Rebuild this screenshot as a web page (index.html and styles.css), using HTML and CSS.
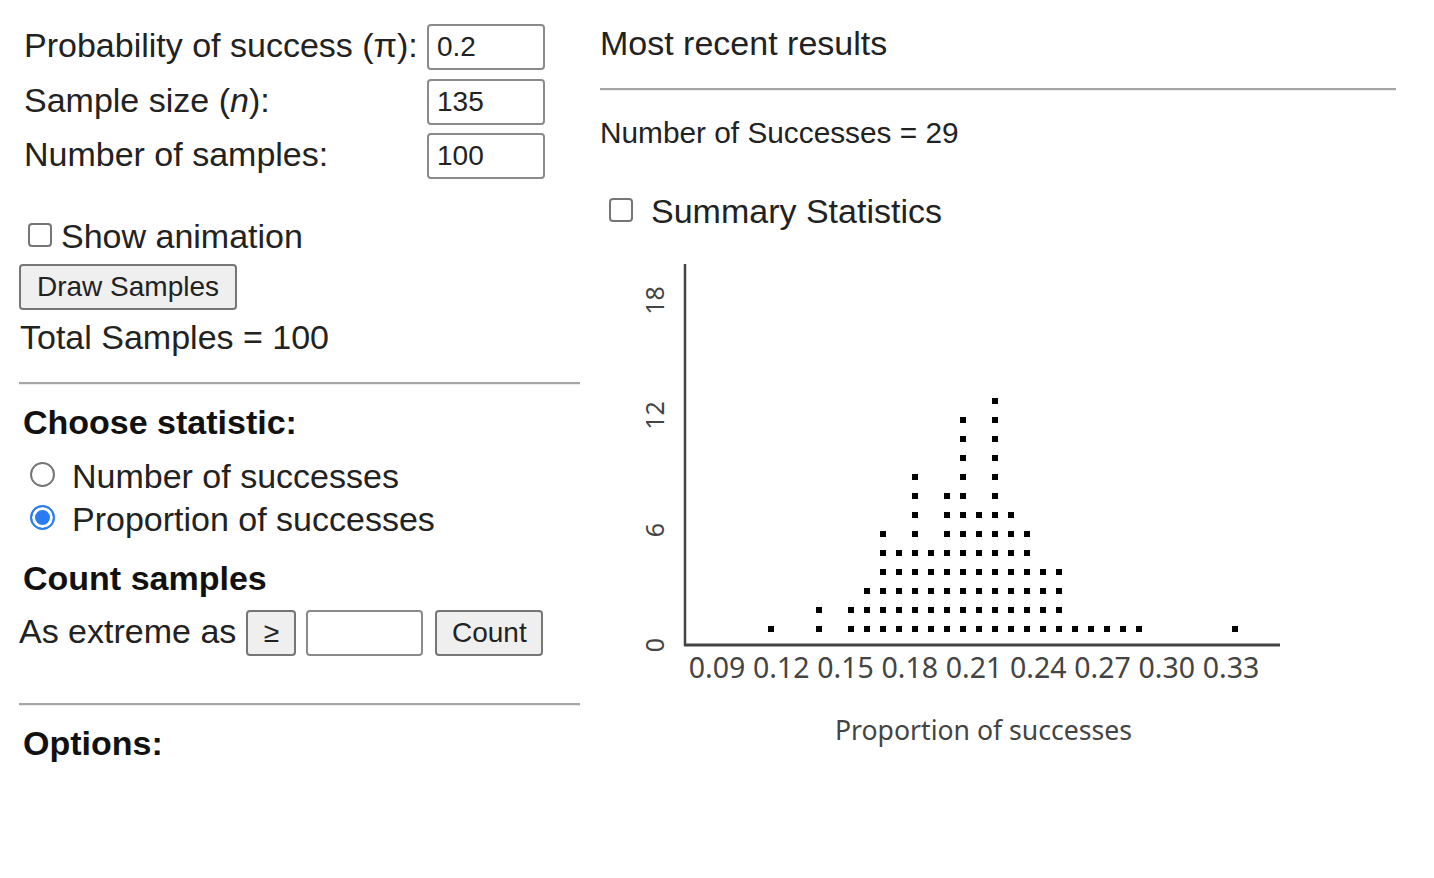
FILE: index.html
```html
<!DOCTYPE html>
<html lang="en">
<head>
<meta charset="utf-8">
<title>Binomial sampling</title>
<link rel="stylesheet" href="styles.css">
</head>
<body>
<div class="page">
  <div class="left">
    <div class="params">
      <label class="plabel">Probability of success (π):</label>
      <input class="field" type="text" value="0.2">
      <label class="plabel">Sample size (<i>n</i>):</label>
      <input class="field" type="text" value="135">
      <label class="plabel">Number of samples:</label>
      <input class="field" type="text" value="100">
    </div>
    <div class="anim-row">
      <span class="checkbox"></span>
      <span class="big">Show animation</span>
    </div>
    <button class="btn draw">Draw Samples</button>
    <div class="big total">Total Samples = 100</div>
    <div class="rule rule-a"></div>
    <div class="heading choose">Choose statistic:</div>
    <div class="radio-row first">
      <span class="radio"></span>
      <span class="big">Number of successes</span>
    </div>
    <div class="radio-row">
      <span class="radio checked"></span>
      <span class="big">Proportion of successes</span>
    </div>
    <div class="heading count-h">Count samples</div>
    <div class="extreme-row">
      <span class="big">As extreme as</span>
      <button class="btn ge">≥</button>
      <input class="field blank" type="text" value="">
      <button class="btn count">Count</button>
    </div>
    <div class="rule rule-b"></div>
    <div class="heading options">Options:</div>
  </div>

  <div class="right">
    <div class="big recent">Most recent results</div>
    <div class="rule rule-r"></div>
    <div class="succ">Number of Successes = 29</div>
    <div class="summary-row">
      <span class="checkbox"></span>
      <span class="big">Summary Statistics</span>
    </div>
    <svg class="chart" width="680" height="510" viewBox="620 250 680 510" xmlns="http://www.w3.org/2000/svg">
      <defs>
        <pattern id="dot" patternUnits="userSpaceOnUse" x="768" y="625" width="16" height="19">
          <rect x="0" y="0" width="6" height="6" fill="#000"/>
        </pattern>
      </defs>
      <g fill="url(#dot)" shape-rendering="crispEdges">
        <rect x="768" y="625" width="6" height="6"/>
        <rect x="816" y="606" width="6" height="25"/>
        <rect x="848" y="606" width="6" height="25"/>
        <rect x="864" y="587" width="6" height="44"/>
        <rect x="880" y="530" width="6" height="101"/>
        <rect x="896" y="549" width="6" height="82"/>
        <rect x="912" y="473" width="6" height="158"/>
        <rect x="928" y="549" width="6" height="82"/>
        <rect x="944" y="492" width="6" height="139"/>
        <rect x="960" y="416" width="6" height="215"/>
        <rect x="976" y="511" width="6" height="120"/>
        <rect x="992" y="397" width="6" height="234"/>
        <rect x="1008" y="511" width="6" height="120"/>
        <rect x="1024" y="530" width="6" height="101"/>
        <rect x="1040" y="568" width="6" height="63"/>
        <rect x="1056" y="568" width="6" height="63"/>
        <rect x="1072" y="625" width="6" height="6"/>
        <rect x="1088" y="625" width="6" height="6"/>
        <rect x="1104" y="625" width="6" height="6"/>
        <rect x="1120" y="625" width="6" height="6"/>
        <rect x="1136" y="625" width="6" height="6"/>
        <rect x="1232" y="625" width="6" height="6"/>
      </g>
      <line class="axis" x1="685" y1="263" x2="685" y2="645" stroke-width="2.5"/>
      <line class="axis" x1="684" y1="644" x2="1280" y2="644" stroke-width="3"/>
      <g class="ytick">
        <text x="654" y="644" transform="rotate(-90 654 644)">0</text>
        <text x="654" y="529" transform="rotate(-90 654 529)">6</text>
        <text x="654" y="414.5" transform="rotate(-90 654 414.5)">12</text>
        <text x="654" y="299.5" transform="rotate(-90 654 299.5)">18</text>
      </g>
      <g class="xtick">
        <text x="717" y="677">0.09</text>
        <text x="781.3" y="677">0.12</text>
        <text x="845.5" y="677">0.15</text>
        <text x="909.8" y="677">0.18</text>
        <text x="974" y="677">0.21</text>
        <text x="1038.3" y="677">0.24</text>
        <text x="1102.5" y="677">0.27</text>
        <text x="1166.8" y="677">0.30</text>
        <text x="1231" y="677">0.33</text>
      </g>
      <text class="xlabel" x="983.5" y="739">Proportion of successes</text>
    </svg>
  </div>
</div>
</body>
</html>
```

FILE: styles.css
```css
html, body {
  margin: 0;
  padding: 0;
  background: #ffffff;
}

body {
  font-family: "Liberation Sans", Arial, sans-serif;
  color: #222222;
}

.page {
  display: flex;
  align-items: flex-start;
  padding-left: 19px;
}

.left {
  width: 561px;
  display: flex;
  flex-direction: column;
  align-items: flex-start;
}

.right {
  width: 796px;
  margin-left: 20px;
  display: flex;
  flex-direction: column;
  align-items: flex-start;
}

.big {
  font-size: 34px;
  line-height: 38.5px;
  white-space: nowrap;
}

/* parameter grid */
.params {
  display: grid;
  grid-template-columns: 398px 118px;
  column-gap: 5px;
  row-gap: 8.5px;
  padding-left: 5px;
  margin-top: 24px;
}

.plabel {
  font-size: 34px;
  line-height: 38.5px;
  align-self: center;
  white-space: nowrap;
  margin-top: -3px;
}

.field {
  box-sizing: border-box;
  height: 46px;
  width: 118px;
  margin: 0;
  border: 2px solid #8a8a8a;
  border-radius: 4px;
  padding: 0 8px;
  font-family: "Liberation Sans", Arial, sans-serif;
  font-size: 28px;
  color: #222222;
  background: #ffffff;
  outline: none;
}

/* checkbox rows */
.anim-row,
.summary-row {
  display: flex;
  align-items: center;
  height: 38.5px;
}

.anim-row {
  margin-top: 38px;
}

.summary-row {
  margin-top: 42px;
}

.checkbox {
  box-sizing: border-box;
  width: 24px;
  height: 24px;
  border: 2px solid #767676;
  border-radius: 4px;
  background: #ffffff;
  margin-left: 9px;
  margin-right: 9px;
  margin-top: -2px;
  flex: none;
}

.summary-row .checkbox {
  margin-right: 18px;
  margin-top: -4px;
}

/* buttons */
.btn {
  box-sizing: border-box;
  height: 46px;
  margin: 0;
  border: 2px solid #767676;
  border-radius: 4px;
  background: #efefef;
  font-family: "Liberation Sans", Arial, sans-serif;
  font-size: 28px;
  color: #222222;
  padding: 0 15px;
  white-space: nowrap;
}

.draw {
  margin-top: 8.5px;
  width: 218px;
  padding: 0;
}

.total {
  margin-top: 7.75px;
  margin-left: 1px;
}

.rule {
  align-self: stretch;
  height: 0;
  border-top: 2px solid #a6a6a6;
  border-bottom: 1px solid #ececec;
}

.rule-a {
  margin-top: 26px;
}

.rule-b {
  margin-top: 47px;
}

.heading {
  font-size: 34px;
  line-height: 38.5px;
  font-weight: bold;
  color: #111111;
  padding-left: 4px;
  white-space: nowrap;
}

.choose {
  margin-top: 18px;
}

.radio-row {
  display: flex;
  align-items: center;
  height: 43px;
}

.radio-row.first {
  margin-top: 13px;
}

.radio {
  box-sizing: border-box;
  width: 25px;
  height: 25px;
  border-radius: 50%;
  border: 2px solid #767676;
  background: #ffffff;
  margin-left: 10.5px;
  margin-right: 17.5px;
  margin-top: -3px;
  flex: none;
}

.radio.checked {
  border: 2px solid #2a7cf6;
  background: #2a7cf6;
  box-shadow: inset 0 0 0 3px #ffffff;
}

.count-h {
  margin-top: 18px;
}

.extreme-row {
  display: flex;
  align-items: center;
  margin-top: 12.5px;
  height: 46px;
}

.extreme-row .big {
  margin-top: -4px;
}

.ge {
  width: 50px;
  padding: 0;
  margin-left: 10px;
}

.blank {
  width: 117px;
  margin-left: 10px;
}

.count {
  width: 108px;
  padding: 0;
  margin-left: 12px;
}

.options {
  margin-top: 18.5px;
}

/* right column */
.recent {
  margin-top: 23.75px;
}

.rule-r {
  margin-top: 26px;
}

.succ {
  font-size: 29.8px;
  line-height: 34px;
  margin-top: 25px;
  white-space: nowrap;
}

.chart {
  display: block;
  margin-top: 19.75px;
  margin-left: 20px;
}

.axis {
  stroke: #444444;
}

.ytick text {
  font-family: "Noto Sans", "DejaVu Sans", sans-serif;
  font-size: 25px;
  fill: #444444;
  text-anchor: middle;
  dominant-baseline: central;
}

.xtick text {
  font-family: "Noto Sans", "DejaVu Sans", sans-serif;
  font-size: 28.5px;
  fill: #444444;
  text-anchor: middle;
}

.xlabel {
  font-family: "Noto Sans", "DejaVu Sans", sans-serif;
  font-size: 26.6px;
  fill: #444444;
  text-anchor: middle;
}
```
